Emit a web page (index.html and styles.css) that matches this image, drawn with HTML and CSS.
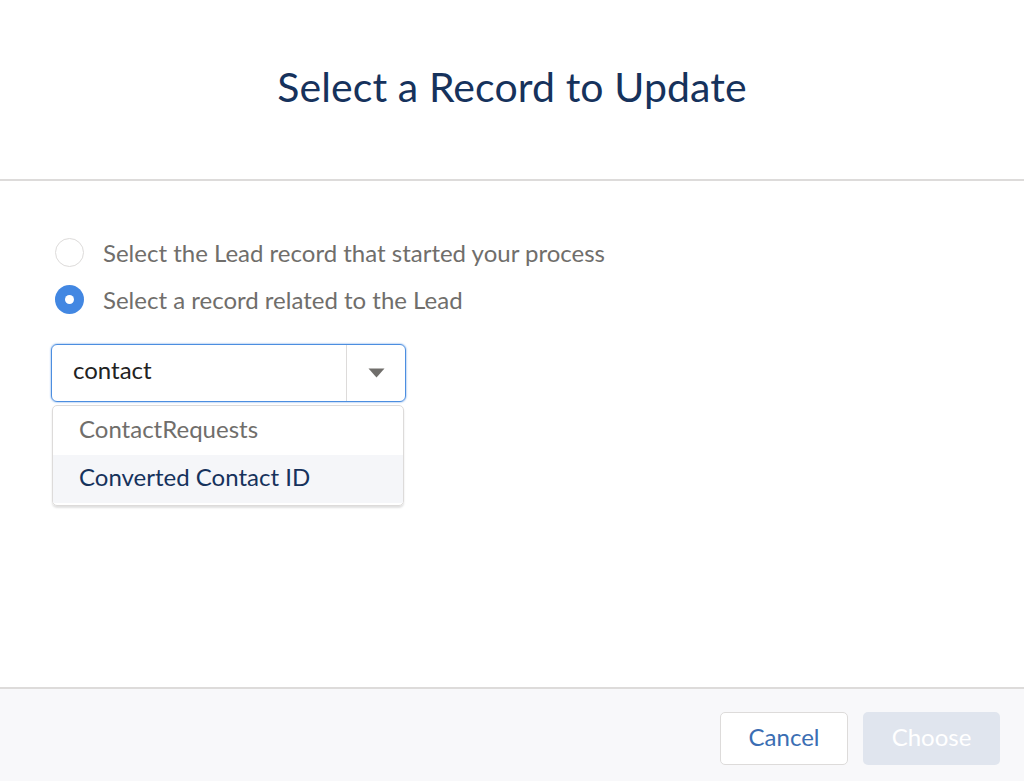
FILE: index.html
```html
<!DOCTYPE html>
<html>
<head>
<meta charset="utf-8">
<link rel="stylesheet" href="styles.css">
</head>
<body>
<div class="modal">
  <header class="head">
    <h1 class="title">Select a Record to Update</h1>
  </header>
  <main class="content">
    <div class="options">
      <label class="option">
        <span class="radio"></span>
        <span class="label">Select the Lead record that started your process</span>
      </label>
      <label class="option">
        <span class="radio checked"><span class="dot"></span></span>
        <span class="label">Select a record related to the Lead</span>
      </label>
    </div>
    <div class="combo">
      <div class="input">
        <span class="value">contact</span>
        <span class="toggle">
          <svg width="17" height="10" viewBox="0 0 17 10"><path d="M0.5 0.5 L16.5 0.5 L8.5 9.5 Z" fill="#706e6b"/></svg>
        </span>
      </div>
      <ul class="list">
        <li class="item">ContactRequests</li>
        <li class="item active">Converted Contact ID</li>
      </ul>
    </div>
  </main>
  <footer class="foot">
    <button class="btn cancel">Cancel</button>
    <button class="btn choose">Choose</button>
  </footer>
</div>
</body>
</html>
```
FILE: styles.css
```css
* { box-sizing: border-box; }
html, body { margin: 0; padding: 0; }
body {
  width: 1024px;
  height: 781px;
  background: #ffffff;
  font-family: Lato, "Liberation Sans", sans-serif;
  overflow: hidden;
}
.modal {
  display: flex;
  flex-direction: column;
  height: 781px;
}
.head {
  height: 181px;
  border-bottom: 2px solid #dddbda;
  display: flex;
  justify-content: center;
  padding-top: 63px;
}
.title {
  margin: 0;
  font-weight: 400;
  font-size: 41px;
  line-height: 48px;
  color: #16325c;
  letter-spacing: 0.1px;
}
.content {
  flex: 1;
  padding: 57px 51px 0;
}
.options {
  display: flex;
  flex-direction: column;
  gap: 19px;
}
.option {
  display: flex;
  align-items: center;
  gap: 19px;
  height: 28px;
  padding-left: 4px;
}
.radio {
  width: 29px;
  height: 29px;
  border-radius: 50%;
  border: 1.5px solid #dddbda;
  background: #fff;
  display: flex;
  align-items: center;
  justify-content: center;
  flex: none;
}
.radio.checked {
  border: none;
  background: #4287e2;
}
.dot {
  width: 9px;
  height: 9px;
  border-radius: 50%;
  background: #fff;
}
.label {
  font-size: 24px;
  color: #706e6b;
}
.combo {
  margin-top: 31px;
  width: 355px;
}
.input {
  height: 58px;
  border: 1.5px solid #4c8ee0;
  border-radius: 6px;
  display: flex;
  align-items: center;
  box-shadow: 0 0 2px #4c8ee0;
}
.value {
  flex: 1;
  padding: 0 0 7px 21px;
  font-size: 24px;
  color: #222;
}
.toggle {
  width: 59px;
  height: 100%;
  border-left: 1px solid #dddbda;
  display: flex;
  align-items: center;
  justify-content: center;
}
.list {
  list-style: none;
  margin: 3px 0 0 1px;
  padding: 0 0 2px;
  width: 352px;
  border: 1px solid #dddbda;
  border-radius: 5px;
  box-shadow: 0 2px 2px rgba(0,0,0,0.12);
  overflow: hidden;
}
.item {
  height: 49px;
  display: flex;
  align-items: center;
  padding: 0 0 5px 26px;
  font-size: 24px;
  color: #706e6b;
}
.item.active {
  height: 48px;
  background: #f5f6f9;
  color: #16325c;
}
.foot {
  height: 94px;
  background: #f8f8fa;
  border-top: 2px solid #dddbda;
  display: flex;
  justify-content: flex-end;
  align-items: flex-start;
  padding: 23px 24px 0 0;
  gap: 15px;
}
.btn {
  height: 53px;
  border-radius: 5px;
  font-family: Lato, "Liberation Sans", sans-serif;
  font-size: 24px;
  padding: 0 0 5px;
}
.cancel {
  width: 128px;
  background: #fff;
  border: 1.5px solid #dddbda;
  color: #3b6eb3;
}
.choose {
  width: 137px;
  background: #e0e5ee;
  border: none;
  color: #fff;
}
```
